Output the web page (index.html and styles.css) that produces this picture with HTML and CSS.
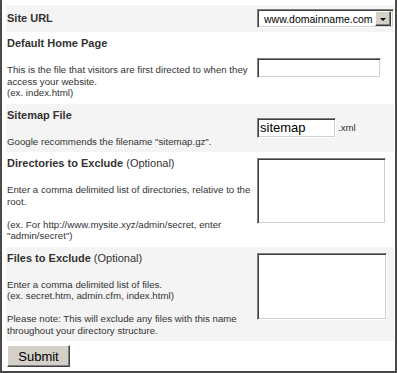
FILE: index.html
```html
<!DOCTYPE html>
<html lang="en">
<head>
  <meta charset="UTF-8">
  <title>Sitemap Settings</title>
  <link rel="stylesheet" href="styles.css">
</head>
<body>
  <form class="sitemap-form">
    <div class="row shade short">
      <div class="label">
        <h2>Site URL</h2>
      </div>
      <div class="field">
        <div class="select">
          <select>
            <option>www.domainname.com</option>
          </select>
          <span class="arrow"></span>
        </div>
      </div>
    </div>

    <div class="row">
      <div class="label">
        <h2>Default Home Page</h2>
        <p>This is the file that visitors are first directed to when they access your website.<br>(ex. index.html)</p>
      </div>
      <div class="field">
        <input type="text" class="text home">
      </div>
    </div>

    <div class="row shade">
      <div class="label">
        <h2>Sitemap File</h2>
        <p>Google recommends the filename "sitemap.gz".</p>
      </div>
      <div class="field">
        <input type="text" class="text filename" value="sitemap">
        <span class="ext">.xml</span>
      </div>
    </div>

    <div class="row">
      <div class="label">
        <h2>Directories to Exclude <span>(Optional)</span></h2>
        <p>Enter a comma delimited list of directories, relative to the root.<br><br>(ex. For http://www.mysite.xyz/admin/secret, enter "admin/secret")</p>
      </div>
      <div class="field top">
        <textarea class="dirs"></textarea>
      </div>
    </div>

    <div class="row shade">
      <div class="label">
        <h2>Files to Exclude <span>(Optional)</span></h2>
        <p>Enter a comma delimited list of files.<br>(ex. secret.htm, admin.cfm, index.html)<br><br>Please note: This will exclude any files with this name throughout your directory structure.</p>
      </div>
      <div class="field top">
        <textarea class="files"></textarea>
      </div>
    </div>

    <button type="button" class="submit">Submit</button>
  </form>
</body>
</html>
```

FILE: styles.css
```css
* {
  box-sizing: border-box;
}

html {
  height: 100%;
}

body {
  margin: 0;
  height: 100%;
  border: solid #4a4a4a;
  border-width: 0 2px 2px 2px;
  padding: 5px 1px 0 4px;
  background: #fff;
  color: #333;
  font-family: "Liberation Sans", Arial, sans-serif;
}

.row {
  display: grid;
  grid-template-columns: 1fr 137px;
}

.row.shade {
  background-color: #f4f4f4;
}

.label {
  padding: 5px 6px 5px 1px;
}

.short .label {
  padding: 7px 6px 7px 1px;
}

.label h2 {
  margin: 0;
  font-size: 11px;
  line-height: 13px;
  font-weight: bold;
}

.label h2 span {
  font-weight: normal;
}

.label p {
  margin: 14px 0 0;
  font-size: 9.7px;
  line-height: 11.5px;
}

.field {
  display: flex;
  align-items: center;
}

.field.top {
  align-items: flex-start;
  padding-top: 6px;
}

/* classic sunken box */
.select,
input.text,
textarea {
  background: #fff;
  border: 1px solid;
  border-color: #808080 #fff #fff #808080;
  box-shadow: inset 1px 1px #404040, inset -1px -1px #d4d0c8;
}

.select {
  display: flex;
  align-items: center;
  width: 137px;
  height: 19px;
  padding: 2px;
}

.select select {
  flex: 1;
  min-width: 0;
  appearance: none;
  border: none;
  background: transparent;
  padding: 0 0 0 4px;
  font-family: "Liberation Sans", Arial, sans-serif;
  font-size: 10.5px;
  color: #000;
  outline: none;
}

.select .arrow {
  width: 16px;
  height: 15px;
  background: #d4d0c8;
  border: 1px solid;
  border-color: #fff #404040 #404040 #fff;
  box-shadow: inset -1px -1px #808080;
  display: flex;
  align-items: center;
  justify-content: center;
}

.select .arrow::after {
  content: "";
  border-left: 3px solid transparent;
  border-right: 3px solid transparent;
  border-top: 3px solid #000;
  margin-top: 1px;
}

input.text {
  height: 20px;
  padding: 0 2px;
  font-family: "Liberation Sans", Arial, sans-serif;
  font-size: 13px;
  color: #000;
  outline: none;
}

input.home {
  width: 124px;
}

input.filename {
  width: 79px;
}

.ext {
  margin-left: 2px;
  font-size: 9.7px;
}

textarea {
  resize: none;
  outline: none;
  padding: 2px;
}

textarea.dirs {
  width: 129px;
  height: 66px;
}

textarea.files {
  width: 130px;
  height: 67px;
}

.submit {
  display: block;
  margin: 4px 0 0 1px;
  width: 63px;
  height: 22px;
  padding: 0;
  background: #d4d0c8;
  border: 1px solid;
  border-color: #fff #404040 #404040 #fff;
  box-shadow: inset -1px -1px #808080;
  font-family: "Liberation Sans", Arial, sans-serif;
  font-size: 13px;
  color: #000;
}
```
